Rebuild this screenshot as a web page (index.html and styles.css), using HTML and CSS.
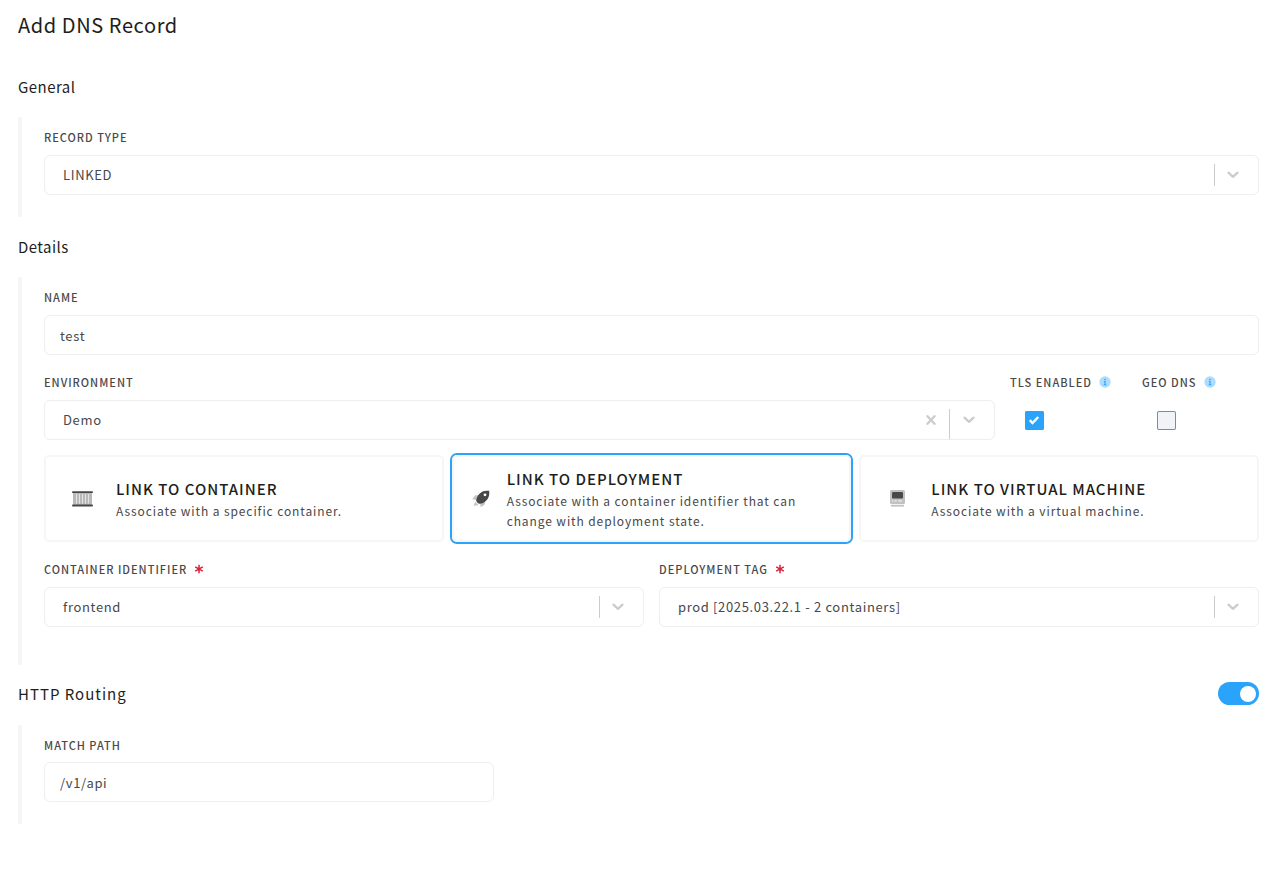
FILE: index.html
```html
<!DOCTYPE html>
<html lang="en">
<head>
<meta charset="utf-8">
<title>Add DNS Record</title>
<link rel="stylesheet" href="styles.css">
</head>
<body>
<svg class="sprite" aria-hidden="true">
  <symbol id="chevron" viewBox="0 0 12 8"><path d="M1.500 1.700 6 5.900l4.500-4.200" fill="none" stroke="#ccc" stroke-width="2.300" stroke-linecap="round" stroke-linejoin="round"/></symbol>
  <symbol id="info" viewBox="0 0 12 12"><circle cx="6" cy="6" r="5.700" fill="#addcff"/><circle cx="6" cy="3.600" r=".8" fill="#2aa3fb"/><path d="M4.900 5.500H6v3M4.700 8.700h2.700" fill="none" stroke="#2aa3fb" stroke-width="1.100"/></symbol>
  <symbol id="required" viewBox="0 0 10 10"><path d="M5 .8v8.400M1.200 2.800l7.600 4.400M8.800 2.800 1.200 7.200" stroke="#d9213c" stroke-width="1.500"/></symbol>
</svg>
<form class="page">
  <h1 class="title">Add DNS Record</h1>

  <h2 class="heading">General</h2>
  <section class="section">
    <div class="field">
      <label class="label" for="type">Record Type</label>
      <div class="select">
        <select class="control" id="type"><option>LINKED</option></select>
        <span class="tools"><span class="divider"></span><svg class="chevron"><use href="#chevron"/></svg></span>
      </div>
    </div>
  </section>

  <h2 class="heading">Details</h2>
  <section class="section section-details">
    <div class="field">
      <label class="label" for="name">Name</label>
      <input class="control" id="name" type="text" value="test">
    </div>
    <div class="row-env">
      <div class="field">
        <label class="label" for="env">Environment</label>
        <div class="select">
          <select class="control" id="env"><option>Demo</option></select>
          <span class="tools tools-clearable">
            <button class="clear" type="button" aria-label="Clear environment"><svg width="10" height="12" viewBox="0 0 10 12"><path d="M1.500 2.200 8.500 9.800M8.500 2.200 1.500 9.800" stroke="#ccc" stroke-width="2.400" stroke-linecap="round"/></svg></button>
            <span class="divider divider-long"></span><svg class="chevron"><use href="#chevron"/></svg>
          </span>
        </div>
      </div>
      <div class="field">
        <label class="label" for="tls">TLS Enabled <svg class="info"><use href="#info"/></svg></label>
        <div class="check">
          <input class="box" id="tls" type="checkbox" checked>
          <svg class="tick" viewBox="0 0 12 10"><path d="M1.800 5.200 4.500 8 10.300 2" fill="none" stroke="#fff" stroke-width="2.400"/></svg>
        </div>
      </div>
      <div class="field">
        <label class="label" for="geo">Geo DNS <svg class="info"><use href="#info"/></svg></label>
        <div class="check"><input class="box" id="geo" type="checkbox"></div>
      </div>
    </div>

    <div class="cards" role="radiogroup" aria-label="Link target">
      <label class="card">
        <input class="card-radio" type="radio" name="link">
        <span class="card-icon">
          <svg width="21" height="16" viewBox="0 0 21 16"><path d="M1 1.500h19v13H1z" fill="#b9b9b9"/><path d="M4.500 3v9.500M7.500 3v9.500M10.500 3v9.500M13.500 3v9.500M16.500 3v9.500" stroke="#e4e4e4"/><path d="M.9 1.200h19.200M.9 14.500h19.200" stroke="#48484a" stroke-width="1.800" stroke-linecap="round"/></svg>
        </span>
        <span class="card-text"><span class="card-title">Link to Container</span><span class="card-desc">Associate with a specific container.</span></span>
      </label>
      <label class="card card-compact">
        <input class="card-radio" type="radio" name="link" checked>
        <span class="card-icon">
          <svg width="18" height="18" viewBox="0 0 18 18"><path d="M.3 9.300 3.200 5.200 7.500 5 4.500 10zM8.700 17.300l4.100-2.700.3-4.400-5 3.200zM1.500 16l1.700-4.300 3.300 3.200z" fill="#c4c4c4"/><path d="M17.200.8C12.600.2 9.600 1.200 7.200 4 5.500 6 4.300 8.400 4.300 10.200c0 1.800 1.700 3.600 3.500 3.600 2 0 4.500-1.200 6.300-3C16.800 8.100 17.700 5 17.200.8z" fill="#48484a"/><circle cx="13" cy="4.800" r="1.400" fill="#fff"/></svg>
        </span>
        <span class="card-text"><span class="card-title">Link to Deployment</span><span class="card-desc">Associate with a container identifier that can change with deployment state.</span></span>
      </label>
      <label class="card">
        <input class="card-radio" type="radio" name="link">
        <span class="card-icon">
          <svg width="15" height="17" viewBox="0 0 15 17"><rect width="15" height="14" rx="1.500" fill="#c1c1c1"/><rect x="2" y="2" width="11" height="6.500" rx="1.200" fill="#48484a"/><path d="M2 10.800h1.200M4.500 10.800h2.200M8.300 10.800H12" stroke="#eee" stroke-width="1.300"/><path d="M1 15.700h13" stroke="#c1c1c1" stroke-width="1.800"/></svg>
        </span>
        <span class="card-text"><span class="card-title">Link to Virtual Machine</span><span class="card-desc">Associate with a virtual machine.</span></span>
      </label>
    </div>

    <div class="row-two">
      <div class="field">
        <label class="label" for="container">Container Identifier <svg class="required"><use href="#required"/></svg></label>
        <div class="select">
          <select class="control" id="container"><option>frontend</option></select>
          <span class="tools"><span class="divider"></span><svg class="chevron"><use href="#chevron"/></svg></span>
        </div>
      </div>
      <div class="field">
        <label class="label" for="tag">Deployment Tag <svg class="required"><use href="#required"/></svg></label>
        <div class="select">
          <select class="control" id="tag"><option>prod [2025.03.22.1 - 2 containers]</option></select>
          <span class="tools"><span class="divider"></span><svg class="chevron"><use href="#chevron"/></svg></span>
        </div>
      </div>
    </div>
  </section>

  <div class="heading-row">
    <h2 class="heading heading-http"><label for="routing">HTTP Routing</label></h2>
    <input class="switch" id="routing" type="checkbox" role="switch" checked>
  </div>
  <section class="section">
    <div class="field field-path">
      <label class="label" for="path">Match Path</label>
      <input class="control" id="path" type="text" value="/v1/api">
    </div>
  </section>
</form>
</body>
</html>
```
FILE: styles.css
```css
* { box-sizing: border-box; }

body {
  margin: 0;
  background: #fff;
  color: #1e1e20;
  font-family: "Noto Sans CJK SC", "Noto Sans", sans-serif;
  font-size: 14px;
  line-height: 20px;
}

.sprite { display: none; }
.page { padding: 10px 18px 56px; }

.title { margin: 0 0 37px; font-size: 20px; line-height: 30px; font-weight: 400; letter-spacing: 0.03em; }
.heading { margin: 20px 0; font-size: 15px; line-height: 20px; font-weight: 400; letter-spacing: 0.03em; }
.heading-row { display: flex; align-items: center; justify-content: space-between; margin: 17px 0 20px; }
.heading-http { margin: 0; letter-spacing: 1px; }

.section {
  display: flex;
  flex-direction: column;
  gap: 15px;
  padding: 10px 0 22px 22px;
  border-left: 4px solid #f5f5f5;
}
.section-details { padding-bottom: 38px; }

.field { display: flex; flex-direction: column; gap: 8px; min-width: 0; }
.field-path { gap: 7px; width: 450px; max-width: 100%; }
.label {
  display: flex;
  align-items: center;
  gap: 7px;
  color: #48484a;
  font-size: 11px;
  line-height: 20px;
  font-weight: 500;
  letter-spacing: 1px;
  text-transform: uppercase;
}

.control {
  width: 100%;
  height: 40px;
  padding: 0 15px;
  border: 1px solid #eee;
  border-radius: 6px;
  background: #fff;
  color: #48484a;
  font: inherit;
  font-size: 13px;
  letter-spacing: 0.05em;
  appearance: none;
}

.select { position: relative; }
.select .control { padding: 0 64px 0 18px; }
.tools {
  position: absolute;
  inset: 0 20px 0 auto;
  display: flex;
  align-items: center;
  gap: 12px;
  pointer-events: none;
}
.tools-clearable { gap: 13px; }
.divider { width: 1px; height: 22px; background: #ccc; }
.divider-long { height: auto; align-self: stretch; margin: 9px 0 1px; }
.chevron { width: 12px; height: 8px; }
.clear { display: flex; padding: 0; border: 0; background: none; pointer-events: auto; }

.info { width: 12px; height: 12px; }
.required { width: 10px; height: 10px; }

.row-env { display: grid; grid-template-columns: 1fr 117px 117px; gap: 15px; margin-top: 2px; }
.row-two { display: grid; grid-template-columns: 1fr 1fr; gap: 15px; margin-top: 2px; }

.check { position: relative; display: flex; align-items: center; height: 40px; padding-left: 15px; }
.box { width: 19px; height: 19px; margin: 0; border: 0; border-radius: 2px; background: #f1f3f6; box-shadow: inset 0 0 0 1px #2aa3fb; appearance: none; }
.box:checked { background: #2aa3fb; }
.tick { position: absolute; left: 18px; width: 12px; height: 10px; pointer-events: none; }

.cards { display: grid; grid-template-columns: repeat(3, 1fr); gap: 8px; }
.card {
  position: relative;
  display: flex;
  align-items: center;
  gap: 12px;
  min-height: 87px;
  padding: 9px 14px;
  border: 2px solid #f6f6f6;
  border-radius: 5px;
}
.card:has(:checked) { box-shadow: 0 0 0 2px #2aa3fb; }
.card-radio { position: absolute; opacity: 0; }
.card-icon { display: flex; flex: none; justify-content: center; width: 44px; }
.card-compact { padding-left: 13px; }
.card-compact .card-icon { width: 28px; }
.card-text { display: flex; flex-direction: column; }
.card-title { font-size: 15px; line-height: 24px; font-weight: 500; letter-spacing: 1px; text-transform: uppercase; }
.card-desc { max-width: 310px; color: #48484a; font-size: 12px; line-height: 20px; letter-spacing: 0.075em; }

.switch {
  display: flex;
  align-items: center;
  width: 41px;
  height: 23px;
  margin: 0;
  padding: 3px;
  border-radius: 12px;
  background: #ccc;
  appearance: none;
}
.switch::before { content: ""; width: 16px; height: 16px; border-radius: 50%; background: #fff; }
.switch:checked { justify-content: flex-end; background: #2aa3fb; }
```
